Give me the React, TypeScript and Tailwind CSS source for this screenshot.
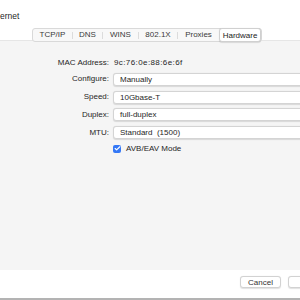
import { Check } from "lucide-react";

const tabs = [
  { label: "TCP/IP", w: "w-[39px]" },
  { label: "DNS", w: "w-[29px]" },
  { label: "WINS", w: "w-[35px]" },
  { label: "802.1X", w: "w-[38px]" },
  { label: "Proxies", w: "w-[41px]" },
];

function Popup({ value }: { value: string }) {
  return (
    <div className="h-[13px] w-[210px] whitespace-pre rounded-[3px] border-[0.5px] border-[#d4d4d4] bg-white pl-[6px] leading-[12px] shadow-[0_0.5px_1px_rgba(0,0,0,0.12)]">
      {value}
    </div>
  );
}

export default function App() {
  return (
    <div className="relative flex h-[300px] w-[300px] flex-col overflow-hidden bg-white font-['Liberation_Sans',Arial,sans-serif] text-[8px] text-[#262626]">
      <div className="h-[28px] pt-[11px] text-[8.5px] leading-[10px] text-[#1f1f1f]">ernet</div>

      <div className="relative z-10 ml-[32px] flex h-[14px] w-[230px] items-center rounded-[3px] border-[0.5px] border-[#d9d9d9] bg-[#f8f8f8] text-[#3a3a3a]">
        {tabs.map((t, i) => (
          <div key={t.label} className="flex items-center">
            <div className={`${t.w} text-center leading-[12px]`}>{t.label}</div>
            {i < tabs.length - 1 && <div className="h-[7px] w-px bg-[#dcdcdc]" />}
          </div>
        ))}
        <div className="h-[14px] flex-1 rounded-[3px] border-[0.5px] border-[#d0d0d0] bg-white text-center leading-[13px] text-[#222] shadow-[0_0.5px_1px_rgba(0,0,0,0.12)]">
          Hardware
        </div>
      </div>

      <div className="-mt-[2px] h-[230px] border-t-[0.5px] border-[#e6e6e6] bg-[#f5f5f5] pt-[17px]">
        <div className="grid grid-cols-[109px_1fr] items-center gap-x-[4px] gap-y-[4.8px]">
          <div className="text-right leading-[10px]">MAC Address:</div>
          <div className="pl-[1px] leading-[10px] tracking-[0.4px]">9c:76:0e:88:6e:6f</div>

          <div className="text-right">Configure:</div>
          <Popup value="Manually" />

          <div className="text-right">Speed:</div>
          <Popup value="10Gbase-T" />

          <div className="text-right">Duplex:</div>
          <Popup value="full-duplex" />

          <div className="text-right">MTU:</div>
          <Popup value="Standard  (1500)" />

          <div />
          <div className="flex items-center gap-[5px] leading-[10px]">
            <div className="flex h-[8px] w-[8px] items-center justify-center rounded-[2px] bg-[#3478f6]">
              <Check className="h-[7px] w-[7px] text-white" strokeWidth={4} />
            </div>
            <span>AVB/EAV Mode</span>
          </div>
        </div>
      </div>

      <div className="flex h-[28px] gap-[7px] pl-[240px] pt-[5.5px]">
        <div className="h-[12px] w-[41px] shrink-0 rounded-[3px] border-[0.5px] border-[#d2d2d2] bg-white text-center leading-[11px] text-[#333] shadow-[0_0.5px_1px_rgba(0,0,0,0.12)]">
          Cancel
        </div>
        <div className="h-[12px] w-[41px] shrink-0 rounded-[3px] border-[0.5px] border-[#d2d2d2] bg-white shadow-[0_0.5px_1px_rgba(0,0,0,0.12)]" />
      </div>
      <div className="h-[2px] bg-[#b3b3b3]" />
    </div>
  );
}
